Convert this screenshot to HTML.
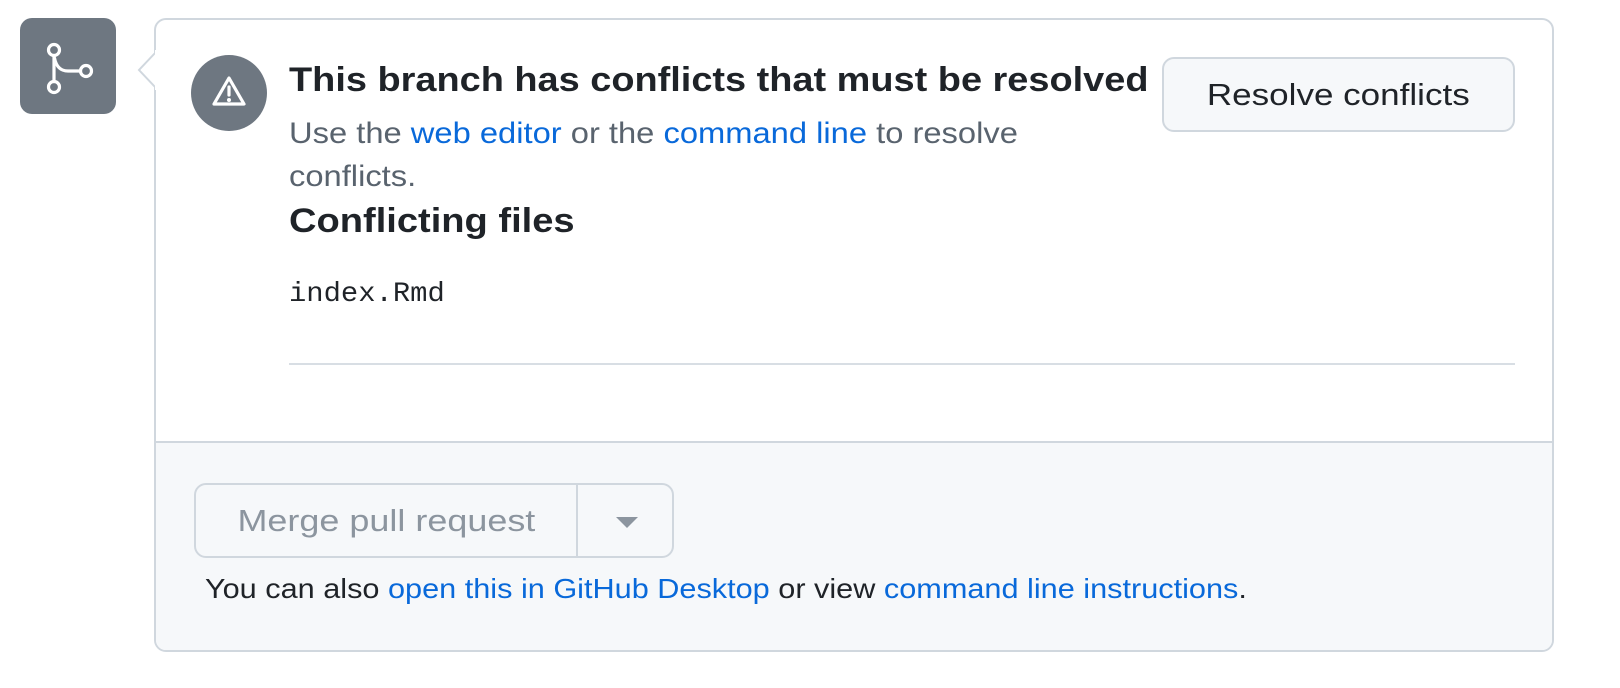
<!DOCTYPE html>
<html><head><meta charset="utf-8"><style>
*{margin:0;padding:0;box-sizing:border-box}
body{width:1620px;height:688px;background:#fff;font-family:"Liberation Sans",sans-serif;position:relative;overflow:hidden;color:#1f2328}
.a{position:absolute;white-space:nowrap}
.s{transform-origin:0 50%}
a{color:#0969da;text-decoration:none}
</style></head><body>
<div class="a" style="left:20px;top:18px;width:96px;height:96px;background:#6e7781;border-radius:12px">
<svg width="96" height="96" viewBox="0 0 96 96"><g fill="none" stroke="#fff" stroke-width="3.2" stroke-linecap="round"><circle cx="34" cy="32" r="5.5"/><circle cx="34" cy="69" r="5.5"/><circle cx="66" cy="53" r="5.5"/><path d="M34 37.5 V63.5"/><path d="M34.5 40 Q37 53 48 53 H60.5"/></g></svg>
</div>
<div class="a" style="left:154px;top:18px;width:1400px;height:634px;border:2px solid #d0d7de;border-radius:12px;overflow:hidden">
<div class="a" style="left:0;top:421px;width:1396px;height:211px;background:#f6f8fa;border-top:2px solid #d0d7de"></div>
</div>
<svg class="a" style="left:136px;top:50px" width="22" height="40"><path d="M20 2 L3 20 L20 38" fill="#fff" stroke="#d0d7de" stroke-width="2"/><rect x="19" y="0" width="4" height="40" fill="#fff"/></svg>
<div class="a" style="left:191px;top:55px;width:76px;height:76px;border-radius:50%;background:#6e7781">
<svg width="76" height="76" viewBox="0 0 76 76"><path d="M38 23 L53 49 H23 Z" fill="none" stroke="#fff" stroke-width="3.2" stroke-linejoin="round"/><path d="M38 32 V40" stroke="#fff" stroke-width="3.2" stroke-linecap="round"/><circle cx="38" cy="45" r="2" fill="#fff"/></svg>
</div>
<div class="a s" style="left:289px;top:61px;font-size:34px;font-weight:bold;transform:scaleX(1.115)">This branch has conflicts that must be resolved</div>
<div class="a s" style="left:289px;top:117px;font-size:30px;color:#59636e;transform:scaleX(1.09)">Use the <a>web editor</a> or the <a>command line</a> to resolve</div>
<div class="a s" style="left:289px;top:160px;font-size:30px;color:#59636e;transform:scaleX(1.09)">conflicts.</div>
<div class="a s" style="left:289px;top:202px;font-size:34px;font-weight:bold;transform:scaleX(1.12)">Conflicting files</div>
<div class="a s" style="left:289px;top:279px;font-size:28px;font-family:'Liberation Mono',monospace;transform:scaleX(1.03)">index.Rmd</div>
<div class="a" style="left:289px;top:363px;width:1226px;height:2px;background:#d8dee4"></div>
<div class="a" style="left:1162px;top:57px;width:353px;height:75px;border:2px solid #d0d7de;border-radius:12px;background:#f6f8fa;font-size:31px;text-align:center;line-height:71px"><span style="display:inline-block;transform:scaleX(1.13)">Resolve conflicts</span></div>
<div class="a" style="left:194px;top:483px;width:480px;height:75px;border:2px solid #d0d7de;border-radius:12px;background:#f6f8fa">
<div class="a" style="left:0;top:0;width:381px;height:71px;text-align:center;line-height:71px;font-size:31px;color:#8c959f"><span style="display:inline-block;transform:scaleX(1.16)">Merge pull request</span></div>
<div class="a" style="left:380px;top:0;width:2px;height:71px;background:#d0d7de"></div>
<svg class="a" style="left:420px;top:32px" width="22" height="12"><path d="M0 0 H22 L11 11 Z" fill="#8c959f"/></svg>
</div>
<div class="a s" style="left:205px;top:573px;font-size:28px;transform:scaleX(1.095)">You can also <a>open this in GitHub Desktop</a> or view <a>command line instructions</a>.</div>
</body></html>
